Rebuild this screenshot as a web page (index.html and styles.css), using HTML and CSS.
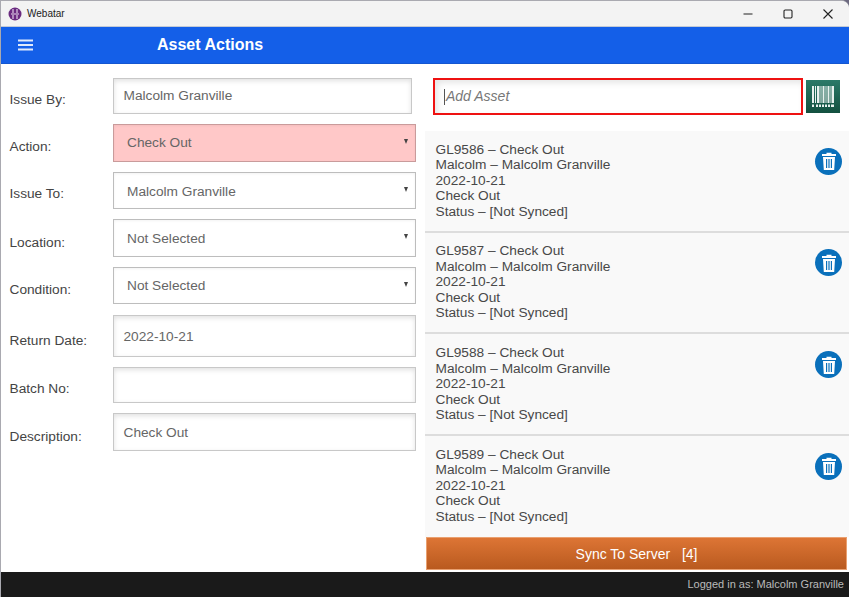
FILE: index.html
```html
<!DOCTYPE html>
<html lang="en">
<head>
<meta charset="utf-8">
<title>Webatar</title>
<link rel="stylesheet" href="styles.css">
</head>
<body>
<div class="window">
  <header class="titlebar">
    <div class="title-left">
      <svg class="logo" width="14" height="14" viewBox="0 0 14 14"><circle cx="7" cy="7" r="6.5" fill="#6a2a80"/><path d="M5 2v4M9 2v4M5 8v4M9 8v4M3 7h8" stroke="#e9dcef" stroke-width="1.1" fill="none"/></svg>
      <span>Webatar</span>
    </div>
    <div class="win-controls">
      <svg width="12" height="12" viewBox="0 0 12 12"><path d="M1.500 6h9" stroke="#222" stroke-width="1.1"/></svg>
      <svg width="12" height="12" viewBox="0 0 12 12"><rect x="2" y="2" width="8" height="8" rx="1.2" fill="none" stroke="#222" stroke-width="1.1"/></svg>
      <svg width="12" height="12" viewBox="0 0 12 12"><path d="M1.500 1.500l9 9M10.500 1.500l-9 9" stroke="#222" stroke-width="1.1"/></svg>
    </div>
  </header>
  <nav class="appbar">
    <svg class="menu" width="15" height="12" viewBox="0 0 15 12"><path d="M0 1.500h15M0 6h15M0 10.500h15" stroke="#dfe9fb" stroke-width="2"/></svg>
    <h1>Asset Actions</h1>
  </nav>
  <main class="main">
    <section class="form">
      <div class="row r-issueby"><label>Issue By:</label><div class="field narrow">Malcolm Granville</div></div>
      <div class="row r-action"><label>Action:</label><div class="field select danger">Check Out<i class="caret"></i></div></div>
      <div class="row r-sel1"><label>Issue To:</label><div class="field select">Malcolm Granville<i class="caret"></i></div></div>
      <div class="row r-sel2"><label>Location:</label><div class="field select">Not Selected<i class="caret"></i></div></div>
      <div class="row r-sel3"><label>Condition:</label><div class="field select">Not Selected<i class="caret"></i></div></div>
      <div class="row r-date"><label>Return Date:</label><div class="field">2022-10-21</div></div>
      <div class="row r-batch"><label>Batch No:</label><div class="field"></div></div>
      <div class="row r-desc"><label>Description:</label><div class="field">Check Out</div></div>
    </section>
    <section class="assets">
      <div class="add-row">
        <div class="add-input"><span class="cursor"></span><span class="add-text">Add Asset</span></div>
        <button class="scan" aria-label="Scan">
          <svg width="24" height="22" viewBox="0 0 24 22" fill="#e8f1ee"><path d="M1 0h2v17H1zM4 0h1v17H4zM6 0h2.500v17H6zM9.500 0h1v17h-1zM11.500 0h2v17h-2zM14.500 0h1v17h-1zM16.500 0h2v17h-2zM19.500 0h1v17h-1zM21 0h2v17h-2zM1 18.500h2V21H1zM5 18.500h2V21H5zM8 18.500h2V21H8zM11 18.500h2V21h-2zM14 18.500h2V21h-2zM17 18.500h2V21h-2zM20 18.500h3V21h-3z"/></svg>
        </button>
      </div>
      <div class="list">
        <article class="item">
          <p>GL9586 – Check Out<br>Malcolm – Malcolm Granville<br>2022-10-21<br>Check Out<br>Status – [Not Synced]</p>
          <button class="trash" aria-label="Delete"><svg width="16" height="18" viewBox="0 0 16 18"><path d="M5.500 2V.8h5V2H15v2H1V2zM2 5h12l-.8 13H2.800zM5 7v9h1.200V7zM7.400 7v9h1.200V7zM9.800 7v9H11V7z" fill="#fff" fill-rule="evenodd"/></svg></button>
        </article>
        <article class="item">
          <p>GL9587 – Check Out<br>Malcolm – Malcolm Granville<br>2022-10-21<br>Check Out<br>Status – [Not Synced]</p>
          <button class="trash" aria-label="Delete"><svg width="16" height="18" viewBox="0 0 16 18"><path d="M5.500 2V.8h5V2H15v2H1V2zM2 5h12l-.8 13H2.800zM5 7v9h1.200V7zM7.400 7v9h1.200V7zM9.800 7v9H11V7z" fill="#fff" fill-rule="evenodd"/></svg></button>
        </article>
        <article class="item">
          <p>GL9588 – Check Out<br>Malcolm – Malcolm Granville<br>2022-10-21<br>Check Out<br>Status – [Not Synced]</p>
          <button class="trash" aria-label="Delete"><svg width="16" height="18" viewBox="0 0 16 18"><path d="M5.500 2V.8h5V2H15v2H1V2zM2 5h12l-.8 13H2.800zM5 7v9h1.200V7zM7.400 7v9h1.200V7zM9.800 7v9H11V7z" fill="#fff" fill-rule="evenodd"/></svg></button>
        </article>
        <article class="item last">
          <p>GL9589 – Check Out<br>Malcolm – Malcolm Granville<br>2022-10-21<br>Check Out<br>Status – [Not Synced]</p>
          <button class="trash" aria-label="Delete"><svg width="16" height="18" viewBox="0 0 16 18"><path d="M5.500 2V.8h5V2H15v2H1V2zM2 5h12l-.8 13H2.800zM5 7v9h1.200V7zM7.400 7v9h1.200V7zM9.800 7v9H11V7z" fill="#fff" fill-rule="evenodd"/></svg></button>
        </article>
      </div>
      <button class="sync">Sync To Server&nbsp;&nbsp; [4]</button>
    </section>
  </main>
  <footer class="footer">Logged in as: Malcolm Granville</footer>
</div>
</body>
</html>
```

FILE: styles.css
```css
* { box-sizing: border-box; }
html, body { margin: 0; height: 100%; background: #6d6a80; overflow: hidden; }
body { font-family: "Liberation Sans", Arial, sans-serif; font-size: 13.7px; color: #444; }
.window {
  width: 849px; height: 597px; display: flex; flex-direction: column;
  background: #fff; border: 1px solid #a9a9b0; border-width: 1px 0 0 1px;
  border-radius: 0 8px 0 0; overflow: hidden;
}
.titlebar {
  height: 26px; flex: none; display: flex; justify-content: space-between; align-items: center;
  background: #f3f3f3; border-bottom: 1px solid #c3cad6; color: #222; font-size: 10px;
}
.title-left { display: flex; align-items: center; gap: 5px; padding-left: 7px; }
.logo { display: block; }
.win-controls { display: flex; gap: 28px; padding-right: 15px; }
.win-controls svg { display: block; }
.appbar {
  height: 37px; flex: none; display: flex; align-items: center; background: #145fe8;
  border-bottom: 1px solid #1456d0;
}
.menu { margin-left: 17px; flex: none; }
.appbar h1 { margin: 0 0 0 124px; font-size: 16px; font-weight: 700; color: #fff; }
.main { flex: 1; min-height: 0; display: flex; }
.form { width: 423px; flex: none; display: flex; flex-direction: column; padding: 14px 0 0 8.500px; }
.row { display: flex; margin-bottom: 10px; }
.row label { width: 103.500px; flex: none; padding-top: 15px; }
.field {
  width: 303px; height: 100%; padding-left: 9.500px; line-height: 34px; color: #666;
  border: 1px solid #c8c8c8; background: #fff; box-shadow: inset 0 2px 5px rgba(0,0,0,.12);
  position: relative;
}
.narrow { width: 299px; }
.select { padding-left: 13px; box-shadow: inset 0 1px 3px rgba(0,0,0,.05); border-color: #bdbdbd; }
.danger { background: #ffc8c8; border-color: #c99b9b; }
.caret {
  position: absolute; right: 7px; top: 50%; margin-top: -4px; width: 0; height: 0;
  border: 2.500px solid transparent; border-top: 5px solid #444; border-bottom: 0;
}
.r-issueby { height: 36px; }
.r-issueby label { padding-top: 14px; }
.r-action { height: 38px; }
.r-action .field { line-height: 36px; }
.r-sel1 { height: 37px; }
.r-sel1 label { padding-top: 14px; }
.r-sel1 .field { line-height: 38px; }
.r-sel2 { height: 38px; }
.r-sel2 label { padding-top: 16px; }
.r-sel2 .field { line-height: 38px; }
.r-sel3 { height: 37px; }
.r-sel3 .field { line-height: 36px; }
.r-date { height: 42px; margin-top: 1px; }
.r-date .field { line-height: 42px; }
.r-date label { padding-top: 18px; }
.r-batch { height: 36px; }
.r-batch label { padding-top: 14px; }
.r-desc { height: 38px; }
.r-desc label { padding-top: 16px; }
.r-desc .field { line-height: 38px; }
.assets { flex: 1; min-width: 0; display: flex; flex-direction: column; padding-top: 14px; }
.add-row { display: flex; align-items: center; padding-left: 9px; gap: 3px; margin-bottom: 16px; height: 37px; }
.add-input {
  width: 370px; height: 37px; border: 2px solid #ee1111; padding-left: 9px;
  font-style: italic; color: #777; box-shadow: inset 3px 3px 6px rgba(0,0,0,.1); display: flex; align-items: center;
}
.add-text { position: relative; top: -1px; font-size: 14px; }
.cursor { width: 1px; height: 16px; background: #555; margin-right: 1px; }
.scan {
  width: 34px; height: 33px; padding: 0; border: 0; display: flex; align-items: center; justify-content: center;
  background: linear-gradient(#2b7a68, #13503f);
}
.scan svg { display: block; }
.list { flex: 1; min-height: 0; background: #f9f9f9; overflow: hidden; margin-left: 1px; }
.item {
  height: 101.700px; display: flex; justify-content: space-between; padding: 10.800px 7px 0 10.500px;
  border-bottom: 2px solid #ddd; background: #f9f9f9;
}
.item.last { border-bottom: 0; }
.item p { margin: 0; line-height: 15.500px; color: #484848; }
.trash {
  width: 27px; height: 27px; margin-top: 6px; padding: 0; border: 0; border-radius: 50%;
  background: #0a70bb; display: flex; align-items: center; justify-content: center;
}
.trash svg { display: block; }
.sync {
  height: 33px; flex: none; margin: 0 2px 2px 2px; padding: 0; border: 1px solid #e9a070;
  background: linear-gradient(#dd7535, #b95a1f); color: #fff; font: 14px "Liberation Sans", Arial, sans-serif;
}
.footer {
  height: 25px; flex: none; background: #1a1a1a; color: #bbb; font-size: 11px; line-height: 24px;
  text-align: right; padding-right: 5px;
}
```
